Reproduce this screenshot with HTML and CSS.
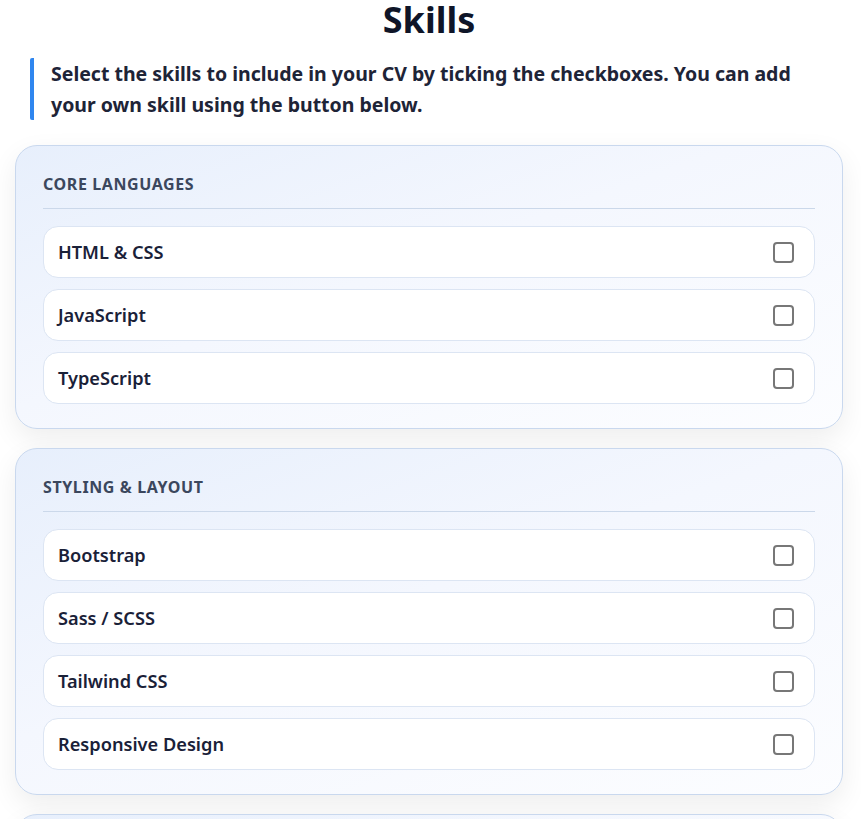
FILE: index.html
```html
<!DOCTYPE html>
<html lang="en">
<head>
<meta charset="utf-8">
<title>Skills</title>
<link rel="stylesheet" href="styles.css">
</head>
<body>
<main class="page">
  <h1 class="title">Skills</h1>
  <p class="intro">Select the skills to include in your CV by ticking the checkboxes. You can add your own skill using the button below.</p>

  <section class="group">
    <h2 class="group-title">Core Languages</h2>
    <ul class="skill-list">
      <li class="skill"><span class="skill-name">HTML &amp; CSS</span><span class="box"></span></li>
      <li class="skill"><span class="skill-name">JavaScript</span><span class="box"></span></li>
      <li class="skill"><span class="skill-name">TypeScript</span><span class="box"></span></li>
    </ul>
  </section>

  <section class="group">
    <h2 class="group-title">Styling &amp; Layout</h2>
    <ul class="skill-list">
      <li class="skill"><span class="skill-name">Bootstrap</span><span class="box"></span></li>
      <li class="skill"><span class="skill-name">Sass / SCSS</span><span class="box"></span></li>
      <li class="skill"><span class="skill-name">Tailwind CSS</span><span class="box"></span></li>
      <li class="skill"><span class="skill-name">Responsive Design</span><span class="box"></span></li>
    </ul>
  </section>

  <section class="group">
    <h2 class="group-title">Frameworks</h2>
    <ul class="skill-list">
      <li class="skill"><span class="skill-name">React</span><span class="box"></span></li>
    </ul>
  </section>
</main>
</body>
</html>
```

FILE: styles.css
```css
* { box-sizing: border-box; }

html, body {
  margin: 0;
  padding: 0;
  background: #ffffff;
}

body {
  font-family: "Noto Sans", "Open Sans", sans-serif;
  color: #1a2138;
}

.page {
  padding: 0 18px 0 15px;
  display: flex;
  flex-direction: column;
}

.title {
  margin: 0;
  text-align: center;
  font-size: 36px;
  line-height: 40px;
  font-weight: 700;
  color: #0f1528;
}

.intro {
  margin: 18px 0 25px 15px;
  padding: 0 30px 0 17px;
  border-left: 4px solid #2f86ef;
  border-radius: 2px;
  font-size: 19.5px;
  line-height: 31px;
  font-weight: 700;
  color: #1e2437;
}

.group {
  border: 1px solid #c9d8ee;
  border-radius: 22px;
  background: linear-gradient(160deg, #e7effc 0%, #f4f7fe 45%, #fcfdff 100%);
  box-shadow: 0 10px 28px rgba(0, 0, 0, 0.07);
  padding: 28px 27px 24px;
  margin-bottom: 19px;
}

.group-title {
  margin: 0;
  font-size: 16px;
  line-height: 20px;
  font-weight: 700;
  letter-spacing: 0.6px;
  text-transform: uppercase;
  color: #3b475d;
  padding-bottom: 14px;
  border-bottom: 1px solid #cbd8ea;
}

.skill-list {
  list-style: none;
  margin: 17px 0 0;
  padding: 0;
  display: flex;
  flex-direction: column;
  gap: 11px;
}

.skill {
  height: 52px;
  display: flex;
  align-items: center;
  justify-content: space-between;
  padding: 0 20px 0 14px;
  background: #ffffff;
  border: 1px solid #dce5f3;
  border-radius: 15px;
}

.skill-name {
  font-size: 18.2px;
  font-weight: 600;
  color: #1a2138;
}

.box {
  width: 21px;
  height: 21px;
  border: 2px solid #777777;
  border-radius: 4px;
  background: #ffffff;
}
```
